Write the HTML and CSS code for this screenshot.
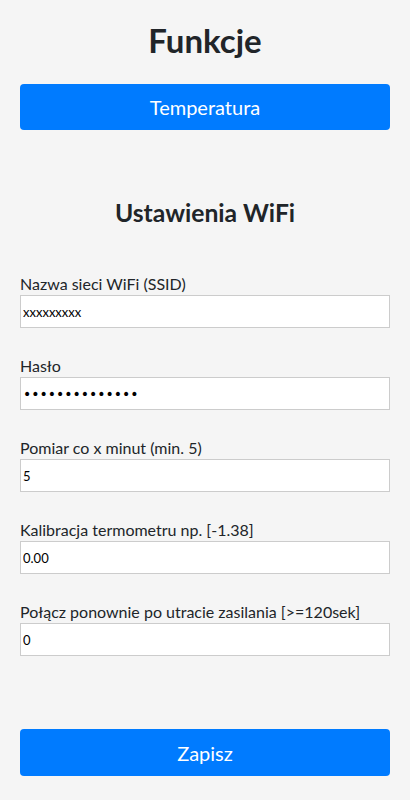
FILE: index.html
```html
<!DOCTYPE html>
<html lang="pl">
<head>
<meta charset="utf-8">
<title>Funkcje</title>
<link rel="stylesheet" href="styles.css">
</head>
<body>
<main class="page">
  <h1 class="title">Funkcje</h1>
  <button class="btn btn-top" type="button">Temperatura</button>
  <h2 class="subtitle">Ustawienia WiFi</h2>
  <form class="form">
    <div class="field">
      <label class="label" for="ssid">Nazwa sieci WiFi (SSID)</label>
      <input class="input" id="ssid" type="text" value="xxxxxxxxx">
    </div>
    <div class="field">
      <label class="label" for="pass">Hasło</label>
      <input class="input input-pass" id="pass" type="password" value="xxxxxxxxxxxxxx">
    </div>
    <div class="field">
      <label class="label" for="interval">Pomiar co x minut (min. 5)</label>
      <input class="input" id="interval" type="text" value="5">
    </div>
    <div class="field">
      <label class="label" for="calib">Kalibracja termometru np. [-1.38]</label>
      <input class="input" id="calib" type="text" value="0.00">
    </div>
    <div class="field">
      <label class="label" for="reconnect">Połącz ponownie po utracie zasilania [&gt;=120sek]</label>
      <input class="input" id="reconnect" type="text" value="0">
    </div>
    <button class="btn btn-save" type="button">Zapisz</button>
  </form>
</main>
</body>
</html>
```
FILE: styles.css
```css
html, body {
  margin: 0;
  padding: 0;
  background: #f5f5f5;
}
body {
  font-family: Lato, "Open Sans", sans-serif;
  color: #212529;
}
.page {
  display: flex;
  flex-direction: column;
  padding: 20px 20px 0;
}
.title {
  margin: 0;
  font-size: 33px;
  line-height: 40px;
  font-weight: 700;
  text-align: center;
}
.btn {
  display: block;
  width: 100%;
  height: 46px;
  border: none;
  border-radius: 4px;
  background: #007bff;
  color: #fff;
  font-family: inherit;
  font-size: 20px;
  padding: 0;
}
.btn-top {
  margin-top: 24px;
}
.subtitle {
  margin: 68px 0 0;
  font-size: 24.7px;
  line-height: 30px;
  font-weight: 700;
  text-align: center;
}
.form {
  display: flex;
  flex-direction: column;
  gap: 27px;
  margin-top: 45px;
}
.field {
  display: flex;
  flex-direction: column;
}
.label {
  font-size: 16px;
  line-height: 22px;
}
.input {
  box-sizing: border-box;
  height: 33px;
  width: 100%;
  margin: 0;
  padding: 1px 2px;
  border: 1px solid #cccccc;
  background: #fff;
  font-family: Lato, sans-serif;
  font-size: 13px;
  color: #000;
}
.input-pass {
  font-family: "DejaVu Sans", sans-serif;
  font-size: 14px;
  letter-spacing: 0;
}
.btn-save {
  margin-top: 46px;
  height: 47px;
}
```
